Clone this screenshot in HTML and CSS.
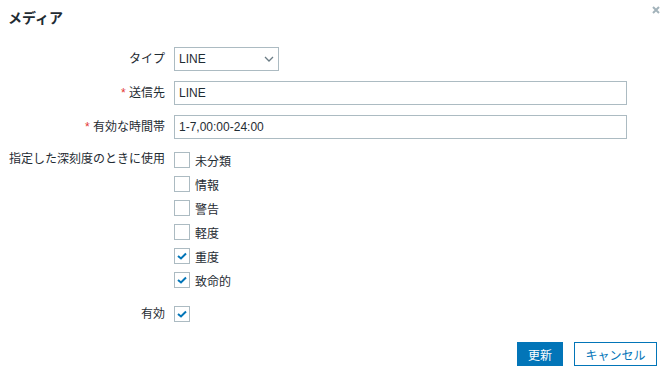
FILE: index.html
```html
<!DOCTYPE html>
<html lang="ja">
<head>
<meta charset="utf-8">
<link rel="stylesheet" href="styles.css">
</head>
<body>
<div class="dialog">
  <div class="head">
    <h4 class="title">メディア</h4>
    <button class="close" aria-label="close"><svg width="8" height="8" viewBox="0 0 8 8"><path d="M1 1L7 7M7 1L1 7" stroke="#a3b3bb" stroke-width="2"/></svg></button>
  </div>
  <div class="form">
    <label class="lbl">タイプ</label>
    <div class="ctl">
      <div class="select"><span>LINE</span><svg width="10" height="6" viewBox="0 0 10 6"><path d="M1 1L5 5L9 1" fill="none" stroke="#6b7c85" stroke-width="1.3"/></svg></div>
    </div>
    <label class="lbl"><span class="req">*</span> 送信先</label>
    <div class="ctl"><div class="input">LINE</div></div>
    <label class="lbl"><span class="req">*</span> 有効な時間帯</label>
    <div class="ctl"><div class="input">1-7,00:00-24:00</div></div>
    <label class="lbl lbl-top">指定した深刻度のときに使用</label>
    <div class="ctl checks">
      <div class="check"><span class="box"></span>未分類</div>
      <div class="check"><span class="box"></span>情報</div>
      <div class="check"><span class="box"></span>警告</div>
      <div class="check"><span class="box"></span>軽度</div>
      <div class="check"><span class="box on"><svg width="10" height="8" viewBox="0 0 10 8"><path d="M1 4L4 6.5L9 1.5" fill="none" stroke="#0275b8" stroke-width="2"/></svg></span>重度</div>
      <div class="check"><span class="box on"><svg width="10" height="8" viewBox="0 0 10 8"><path d="M1 4L4 6.5L9 1.5" fill="none" stroke="#0275b8" stroke-width="2"/></svg></span>致命的</div>
    </div>
    <label class="lbl">有効</label>
    <div class="ctl"><span class="box on"><svg width="10" height="8" viewBox="0 0 10 8"><path d="M1 4L4 6.5L9 1.5" fill="none" stroke="#0275b8" stroke-width="2"/></svg></span></div>
  </div>
  <div class="footer">
    <button class="btn primary">更新</button>
    <button class="btn alt">キャンセル</button>
  </div>
</div>
</body>
</html>
```
FILE: styles.css
```css
* { box-sizing: border-box; }
body {
  margin: 0;
  background: #fff;
  font-family: "Liberation Sans", "Noto Sans CJK JP", sans-serif;
  font-size: 12px;
  color: #1f2c33;
}
.dialog {
  width: 665px;
  height: 373px;
  padding: 0 8px;
  position: relative;
}
.head {
  height: 47px;
  padding-top: 9px;
}
.title {
  margin: 0;
  font-size: 14px;
  font-weight: bold;
  line-height: 18px;
  color: #1f2c33;
}
.close {
  position: absolute;
  top: 5px;
  right: 4px;
  border: 0;
  background: none;
  padding: 0;
  width: 10px;
  height: 10px;
  display: flex;
  align-items: center;
  justify-content: center;
}
.form {
  display: grid;
  grid-template-columns: 157px 453px;
  column-gap: 9px;
  row-gap: 10px;
}
.lbl {
  text-align: right;
  line-height: 24px;
  height: 24px;
  white-space: nowrap;
}
.lbl-top { margin-top: -2px; }
.req { color: #e33734; }
.ctl { display: flex; flex-direction: column; }
.select {
  width: 105px;
  height: 24px;
  border: 1px solid #acbbc2;
  display: flex;
  align-items: center;
  justify-content: space-between;
  padding: 0 4px 0 4px;
}
.input {
  width: 453px;
  height: 24px;
  border: 1px solid #acbbc2;
  line-height: 22px;
  padding: 0 4px;
}
.checks { margin-top: -1px; }
.check {
  height: 24px;
  display: flex;
  align-items: center;
  gap: 5px;
}
.box {
  width: 16px;
  height: 16px;
  border: 1px solid #acbbc2;
  display: flex;
  align-items: center;
  justify-content: center;
  flex: none;
}
.ctl > .box { margin-top: 4px; }
.footer {
  display: flex;
  justify-content: flex-end;
  gap: 11px;
  margin-top: 16px;
}
.btn {
  height: 24px;
  font-family: inherit;
  font-size: 12px;
  border: 1px solid #0275b8;
  padding: 0;
}
.primary {
  width: 46px;
  background: #0275b8;
  color: #fff;
}
.alt {
  width: 83px;
  background: #fff;
  color: #0275b8;
}
```
